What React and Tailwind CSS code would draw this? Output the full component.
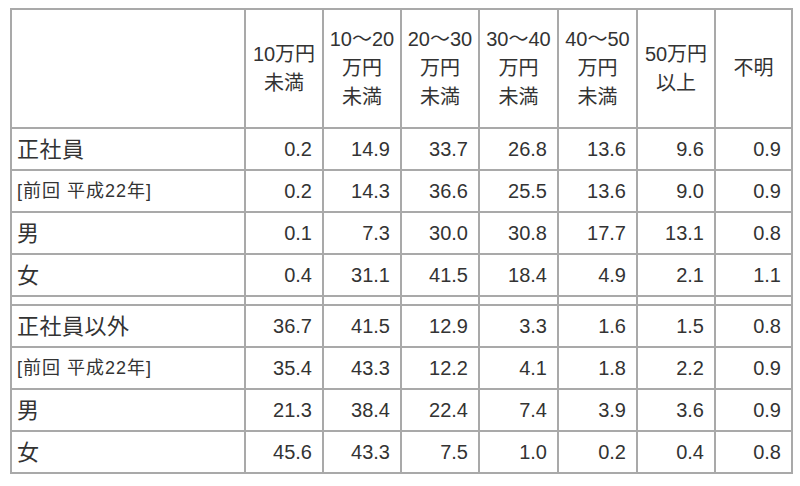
const headers = [
  ['10万円', '未満'],
  ['10～20', '万円', '未満'],
  ['20～30', '万円', '未満'],
  ['30～40', '万円', '未満'],
  ['40～50', '万円', '未満'],
  ['50万円', '以上'],
  ['不明'],
]

const groupA = [
  { label: '正社員', values: ['0.2', '14.9', '33.7', '26.8', '13.6', '9.6', '0.9'] },
  { label: '[前回 平成22年]', small: true, values: ['0.2', '14.3', '36.6', '25.5', '13.6', '9.0', '0.9'] },
  { label: '男', values: ['0.1', '7.3', '30.0', '30.8', '17.7', '13.1', '0.8'] },
  { label: '女', values: ['0.4', '31.1', '41.5', '18.4', '4.9', '2.1', '1.1'] },
]

const groupB = [
  { label: '正社員以外', values: ['36.7', '41.5', '12.9', '3.3', '1.6', '1.5', '0.8'] },
  { label: '[前回 平成22年]', small: true, values: ['35.4', '43.3', '12.2', '4.1', '1.8', '2.2', '0.9'] },
  { label: '男', values: ['21.3', '38.4', '22.4', '7.4', '3.9', '3.6', '0.9'] },
  { label: '女', values: ['45.6', '43.3', '7.5', '1.0', '0.2', '0.4', '0.8'] },
]

const colWidths = ['w-[234px]', 'w-[78px]', 'w-[78px]', 'w-[78px]', 'w-[79px]', 'w-[79px]', 'w-[78px]', 'w-[77px]']

function DataRow({ row }) {
  return (
    <tr className="h-[42px]">
      <td
        className={`border-2 border-[#a9a9a9] pl-[5px] text-left whitespace-nowrap ${
          row.small ? 'text-[18px] tracking-[1px]' : 'text-[22px] tracking-[0.5px]'
        }`}
      >
        {row.label}
      </td>
      {row.values.map((v, i) => (
        <td key={i} className="border-2 border-[#a9a9a9] pr-[10px] text-right text-[20px]">
          {v}
        </td>
      ))}
    </tr>
  )
}

function App() {
  return (
    <div
      className="h-[486px] w-[800px] overflow-hidden bg-white pl-[10px] pt-[8px] text-[#333]"
      style={{ fontFamily: '"Liberation Sans", "Noto Sans CJK JP", sans-serif' }}
    >
      <table className="table-fixed border-collapse border-2 border-[#a9a9a9]">
        <colgroup>
          {colWidths.map((w, i) => (
            <col key={i} className={w} />
          ))}
        </colgroup>
        <tbody>
          <tr className="h-[119px]">
            <td className="border-2 border-[#a9a9a9]"></td>
            {headers.map((lines, i) => (
              <td key={i} className="border-2 border-[#a9a9a9] text-center align-middle text-[20px] leading-[29px]">
                {lines.map((l, j) => (
                  <div key={j} className="whitespace-nowrap">
                    {l}
                  </div>
                ))}
              </td>
            ))}
          </tr>
          {groupA.map((row, i) => (
            <DataRow key={i} row={row} />
          ))}
          <tr className="h-[9px]">
            {colWidths.map((_, i) => (
              <td key={i} className="border-2 border-[#a9a9a9] p-0"></td>
            ))}
          </tr>
          {groupB.map((row, i) => (
            <DataRow key={i} row={row} />
          ))}
        </tbody>
      </table>
    </div>
  )
}

export default App
